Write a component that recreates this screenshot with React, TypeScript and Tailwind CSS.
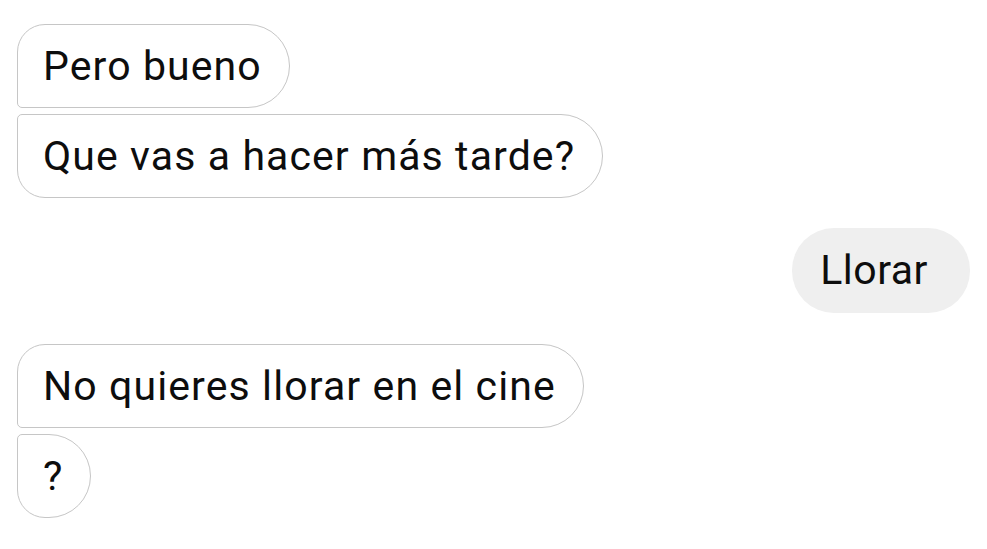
const Bubble = ({ text, shape }: { text: string; shape: string }) => (
    <div className={`h-[84px] flex items-center self-start pl-[25px] pr-[27px] border-[1.5px] border-[#c6c6c6] bg-white ${shape}`}>
        <span className="text-[41px] leading-none text-[#0d0d0d] tracking-[1.1px]">{text}</span>
    </div>
);

export default function App() {
    return (
        <div className="w-[987px] h-[549px] bg-white overflow-hidden font-['Roboto',sans-serif] flex flex-col pl-[17px] pr-[17px] pt-[24px]">
            {/* first group */}
            <div className="flex flex-col gap-[6px]">
                <Bubble text="Pero bueno" shape="rounded-tl-[28px] rounded-bl-[5px] rounded-r-[42px]" />
                <Bubble text="Que vas a hacer más tarde?" shape="rounded-tl-[5px] rounded-bl-[28px] rounded-r-[42px]" />
            </div>

            {/* outgoing */}
            <div className="flex justify-end mt-[30px]">
                <div className="h-[85px] flex items-center pl-[28px] pr-[42px] rounded-[42px] bg-[#efefef]">
                    <span className="text-[41px] leading-none text-[#0d0d0d] tracking-[0.5px]">Llorar</span>
                </div>
            </div>

            {/* second group */}
            <div className="flex flex-col gap-[6px] mt-[31px]">
                <Bubble text="No quieres llorar en el cine" shape="rounded-tl-[28px] rounded-bl-[5px] rounded-r-[42px]" />
                <Bubble text="?" shape="rounded-tl-[5px] rounded-bl-[28px] rounded-r-[42px]" />
            </div>
        </div>
    );
}
